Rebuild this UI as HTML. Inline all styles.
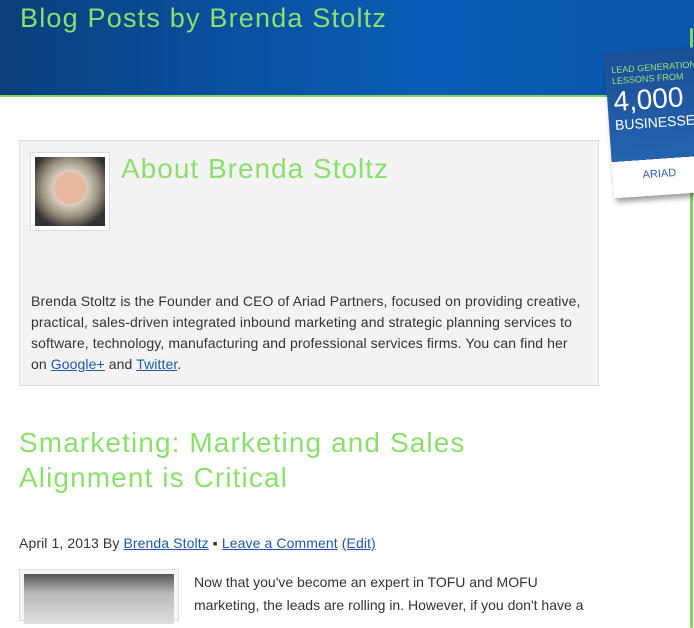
<!DOCTYPE html>
<html><head><style>
body{margin:0;width:694px;height:606px;overflow:hidden;background:#fff;font-family:"Liberation Sans",sans-serif;position:relative}
.hdr{position:absolute;left:0;top:0;width:694px;height:95px;background:linear-gradient(90deg,#0b3e7a 0%,#0a4f9e 30%,#0a5cb5 60%,#0a56aa 100%);border-bottom:2px solid #7fd45e}
.hdr h1{margin:0;position:absolute;left:20px;top:3px;font-weight:normal;font-size:27px;color:#8be06c;letter-spacing:1.2px}
.vline{position:absolute;left:690px;top:28px;width:3px;height:600px;background:#7fd45e;border-radius:3px}
.book{position:absolute;left:609px;top:50px;width:100px;height:145px;background:linear-gradient(#1b4f96,#2563b0 75%,#fff 75%);transform:rotate(-4deg);box-shadow:2px 4px 6px rgba(0,0,0,.4);color:#fff;overflow:hidden}
.book .a{font-size:9px;color:#9fe07a;margin:12px 0 0 6px;line-height:11px}
.book .b{font-size:28px;margin-left:6px;line-height:30px}
.book .c{font-size:14px;margin-left:6px}
.book .d{position:absolute;top:118px;left:30px;font-size:11px;color:#2a5ca8}
.about{position:absolute;left:19px;top:140px;width:578px;height:244px;background:#f3f3f3;border:1px solid #ddd}
.photo{position:absolute;left:10px;top:11px;width:70px;height:69px;border:1px solid #ddd;background:#fff;padding:4px}
.photo div{width:70px;height:69px;background:radial-gradient(circle at 50% 45%,#e7b7a0 0 30%,#d8cfc0 32%,#9b9280 55%,#333 80%)}
.about h2{position:absolute;left:101px;top:12px;margin:0;font-weight:normal;font-size:28px;color:#8be06c;letter-spacing:1.0px}
.about p{position:absolute;left:11px;top:150px;width:556px;margin:0;font-size:14px;line-height:21px;color:#333;letter-spacing:0.1px}
a{color:#1e5aa8;text-decoration:underline}
.pt{position:absolute;left:19px;top:425px;margin:0;font-weight:normal;font-size:28px;line-height:35px;color:#8be06c;letter-spacing:1.1px}
.meta{position:absolute;left:19px;top:535px;font-size:14px;color:#333;letter-spacing:0.1px}
.thumb{position:absolute;left:19px;top:569px;width:158px;height:50px;border:1px solid #ddd;background:#f6f6f6}
.thumb div{margin:4px;height:50px;background:linear-gradient(#555,#bbb 40%,#ddd)}
.ex{position:absolute;left:194px;top:571px;width:410px;font-size:14px;line-height:23px;color:#333}
</style></head><body>
<div class="hdr"><h1>Blog Posts by Brenda Stoltz</h1></div>
<div class="vline"></div>
<div class="book"><div class="a">LEAD GENERATION<br>LESSONS FROM</div><div class="b">4,000</div><div class="c">BUSINESSES</div><div class="d">ARIAD</div></div>
<div class="about">
<div class="photo"><div></div></div>
<h2>About Brenda Stoltz</h2>
<p>Brenda Stoltz is the Founder and CEO of Ariad Partners, focused on providing creative, practical, sales-driven integrated inbound marketing and strategic planning services to software, technology, manufacturing and professional services firms. You can find her on <a>Google+</a> and <a>Twitter</a>.</p>
</div>
<h2 class="pt">Smarketing: Marketing and Sales<br>Alignment is Critical</h2>
<div class="meta">April 1, 2013 By <a>Brenda Stoltz</a> ▪ <a>Leave a Comment</a> <a>(Edit)</a></div>
<div class="thumb"><div></div></div>
<div class="ex">Now that you've become an expert in TOFU and MOFU marketing, the leads are rolling in. However, if you don't have a</div>
</body></html>
